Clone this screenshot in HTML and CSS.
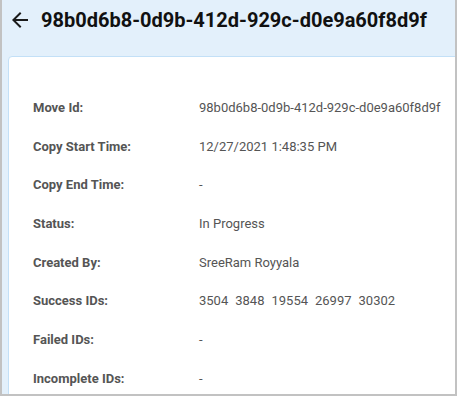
FILE: index.html
```html
<!DOCTYPE html>
<html lang="en">
<head>
  <meta charset="UTF-8">
  <title>Move Details</title>
  <link rel="stylesheet" href="styles.css">
</head>
<body>
  <div class="frame">
    <div class="header">
      <svg class="back" width="24" height="24" viewBox="0 0 24 24">
        <path d="M20 11H7.83l5.59-5.59L12 4l-8 8 8 8 1.41-1.41L7.83 13H20v-2z" fill="#1a1a1a"/>
      </svg>
      <h1 class="title">98b0d6b8-0d9b-412d-929c-d0e9a60f8d9f</h1>
    </div>

    <div class="card">
      <div class="row"><div class="label">Move Id:</div><div class="value">98b0d6b8-0d9b-412d-929c-d0e9a60f8d9f</div></div>
      <div class="row"><div class="label">Copy Start Time:</div><div class="value">12/27/2021 1:48:35 PM</div></div>
      <div class="row"><div class="label">Copy End Time:</div><div class="value">-</div></div>
      <div class="row"><div class="label">Status:</div><div class="value">In Progress</div></div>
      <div class="row"><div class="label">Created By:</div><div class="value">SreeRam Royyala</div></div>
      <div class="row">
        <div class="label">Success IDs:</div>
        <div class="value ids">
          <span>3504</span><span>3848</span><span>19554</span><span>26997</span><span>30302</span>
        </div>
      </div>
      <div class="row"><div class="label">Failed IDs:</div><div class="value">-</div></div>
      <div class="row"><div class="label">Incomplete IDs:</div><div class="value">-</div></div>
    </div>
  </div>
</body>
</html>
```

FILE: styles.css
```css
body {
  margin: 0;
  font-family: Roboto, "Liberation Sans", sans-serif;
}

.frame {
  width: 457px;
  height: 396px;
  box-sizing: border-box;
  background: #e3f0fb;
  border-left: 2px solid #c2c2c2;
  border-right: 2px solid #c2c2c2;
  border-bottom: 2px solid #c2c2c2;
  overflow: hidden;
}

.header {
  height: 56px;
  display: flex;
  align-items: flex-start;
  padding: 8px 0 0 6px;
  box-sizing: border-box;
}

.back {
  flex-shrink: 0;
}

.title {
  margin: 0 0 0 9px;
  font-size: 20px;
  font-weight: 700;
  line-height: 24px;
  color: #111;
}

.card {
  margin-left: 6px;
  width: 480px;
  background: #fff;
  border: 1px solid #c3e0f7;
  border-top-left-radius: 4px;
  padding: 31px 0 0 24px;
  box-sizing: border-box;
  min-height: 400px;
}

.row {
  display: flex;
  align-items: center;
  height: 38.7px;
  font-size: 13px;
  color: #555;
}

.label {
  width: 166px;
  font-weight: 700;
}

.ids {
  display: flex;
  gap: 7px;
}
```
